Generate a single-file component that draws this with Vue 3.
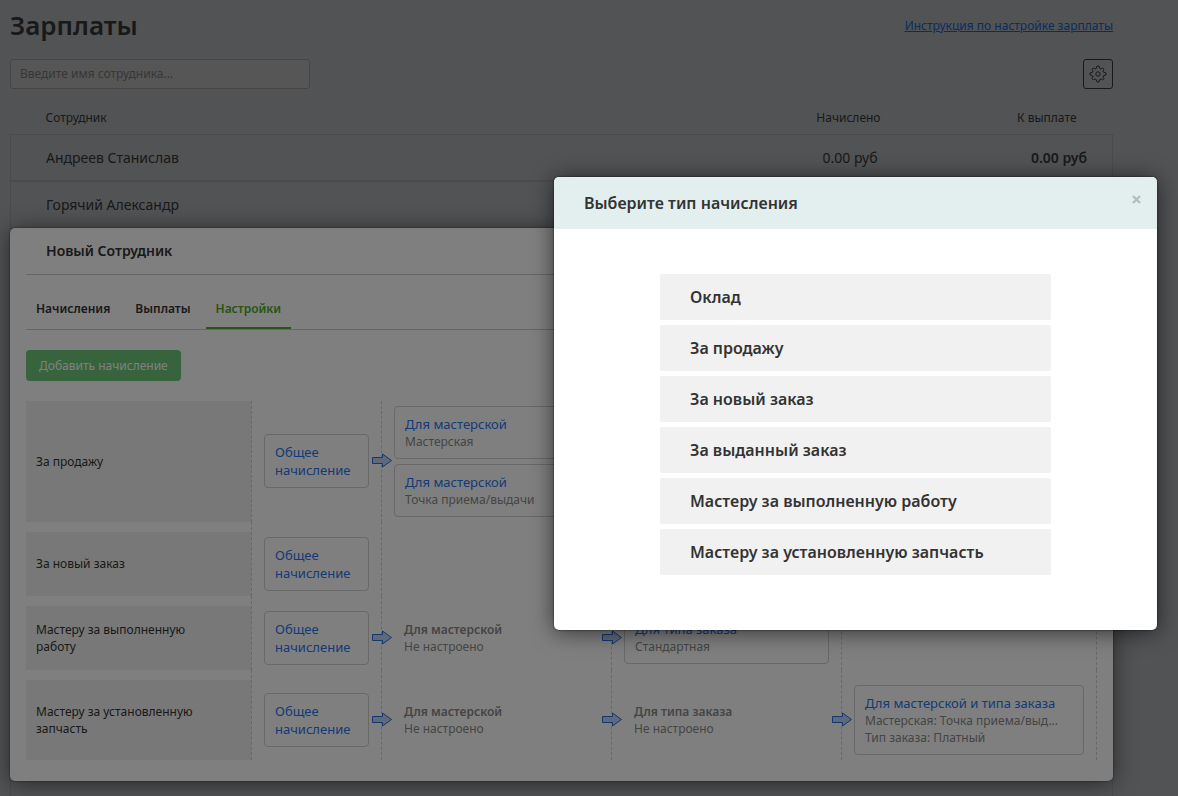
<script setup>
import { ref } from 'vue'

const search = ref('')
const employees = [
  { name: 'Андреев Станислав', accrued: '0.00 руб', due: '0.00 руб' },
  { name: 'Горячий Александр', accrued: '0.00 руб', due: '0.00 руб' }
]
const tabs = ['Начисления', 'Выплаты', 'Настройки']
const activeTab = ref('Настройки')

const common = { items: [{ title: 'Общее начисление', boxed: true }] }
const shopUnset = { items: [{ title: 'Для мастерской', lines: ['Не настроено'] }] }
const rules = [
  {
    label: 'За продажу',
    cells: [
      { ...common, arrow: true },
      {
        items: [
          { title: 'Для мастерской', lines: ['Мастерская'], boxed: true },
          { title: 'Для мастерской', lines: ['Точка приема/выдачи'], boxed: true }
        ]
      },
      { items: [] },
      { items: [] }
    ]
  },
  { label: 'За новый заказ', cells: [common, { items: [] }, { items: [] }, { items: [] }] },
  {
    label: 'Мастеру за выполненную работу',
    cells: [
      { ...common, arrow: true },
      { ...shopUnset, arrow: true },
      { items: [{ title: 'Для типа заказа', lines: ['Стандартная'], boxed: true }] },
      { items: [] }
    ]
  },
  {
    label: 'Мастеру за установленную запчасть',
    cells: [
      { ...common, arrow: true },
      { ...shopUnset, arrow: true },
      { items: [{ title: 'Для типа заказа', lines: ['Не настроено'] }], arrow: true },
      {
        items: [
          {
            title: 'Для мастерской и типа заказа',
            lines: ['Мастерская: Точка приема/выд...', 'Тип заказа: Платный'],
            boxed: true
          }
        ]
      }
    ]
  }
]

const types = [
  'Оклад',
  'За продажу',
  'За новый заказ',
  'За выданный заказ',
  'Мастеру за выполненную работу',
  'Мастеру за установленную запчасть'
]
</script>

<template>
  <div class="app">
    <main class="page">
      <header class="top">
        <h1>Зарплаты</h1>
        <a class="help" href="#">Инструкция по настройке зарплаты</a>
      </header>

      <div class="toolbar">
        <input v-model="search" class="search" type="text" aria-label="Имя сотрудника" placeholder="Введите имя сотрудника..." />
        <button class="gear" type="button" aria-label="Настройки">
          <svg viewBox="-9 -9 18 18" width="18" height="18" fill="none" stroke="currentColor" stroke-linejoin="round">
            <path d="M-1-8H1L1.7-5.6 2.9-5 4.7-6 6-4.7 5-2.9 5.6-1.7 8-1V1L5.6 1.7 5 2.9 6 4.7 4.7 6 2.9 5 1.7 5.6 1 8H-1L-1.7 5.6-2.9 5-4.7 6-6 4.7-5 2.9-5.6 1.7-8 1V-1L-5.6-1.7-5-2.9-6-4.7-4.7-6-2.9-5-1.7-5.6z" />
            <circle cx="0" cy="0" r="2.2" />
          </svg>
        </button>
      </div>

      <table class="people">
        <thead>
          <tr>
            <th scope="col">Сотрудник</th>
            <th scope="col" class="accrued">Начислено</th>
            <th scope="col" class="due">К выплате</th>
          </tr>
        </thead>
        <tbody>
          <tr v-for="p in employees" :key="p.name">
            <td>{{ p.name }}</td>
            <td class="accrued">{{ p.accrued }}</td>
            <td class="due">{{ p.due }}</td>
          </tr>
        </tbody>
      </table>

      <section class="card">
        <h2>Новый Сотрудник</h2>
        <nav class="tabs">
          <button v-for="t in tabs" :key="t" type="button" :class="{ active: t === activeTab }" @click="activeTab = t">{{ t }}</button>
        </nav>
        <button class="add" type="button">Добавить начисление</button>

        <div class="rules">
          <div v-for="r in rules" :key="r.label" class="rule">
            <div class="cell name"><div class="label">{{ r.label }}</div></div>
            <div v-for="(c, i) in r.cells" :key="i" class="cell">
              <div class="stack">
                <component :is="it.boxed ? 'button' : 'div'" v-for="(it, k) in c.items" :key="k" :class="it.boxed ? 'box' : 'unset'" :type="it.boxed ? 'button' : null">
                  <span class="title">{{ it.title }}</span>
                  <span v-for="l in it.lines" :key="l" class="line">{{ l }}</span>
                </component>
                <svg v-if="c.arrow" class="arrow" viewBox="0 0 20 15" width="20" height="15">
                  <path d="M.5 4.5H10.5V1L19.5 7.5 10.5 14V10.5H.5z" />
                </svg>
              </div>
            </div>
          </div>
        </div>
      </section>
      <div class="after"></div>
    </main>

    <div class="overlay">
      <div class="dialog" role="dialog" aria-modal="true" aria-labelledby="dialog-title">
        <header>
          <h3 id="dialog-title">Выберите тип начисления</h3>
          <button class="close" type="button" aria-label="Закрыть">
            <svg viewBox="0 0 9 9" width="9" height="9"><path d="M1 1l7 7M8 1L1 8" stroke="currentColor" stroke-width="2.4" /></svg>
          </button>
        </header>
        <div class="types">
          <button v-for="t in types" :key="t" type="button">{{ t }}</button>
        </div>
      </div>
    </div>
  </div>
</template>

<style>
body {
  margin: 0;
  background: #515355;
}
</style>

<style scoped>
* {
  box-sizing: border-box;
}
.app {
  position: relative;
  height: 100vh;
  overflow: hidden;
  background: #a3a6aa;
  color: #333;
  font: 12px/17px "Noto Sans", "Open Sans", sans-serif;
}
button {
  font: inherit;
  color: inherit;
  cursor: pointer;
}
.page {
  display: flex;
  flex-direction: column;
  min-height: 100%;
  padding: 0 65px 0 10px;
}
.top {
  display: flex;
  align-items: center;
  justify-content: space-between;
  height: 50px;
}
h1 {
  margin: 0;
  font-size: 26px;
  line-height: 36px;
  font-weight: 600;
}
.help {
  color: #1659c0;
}
.toolbar {
  display: flex;
  justify-content: space-between;
  padding-top: 9px;
}
.search {
  width: 300px;
  height: 30px;
  padding: 0 9px 2px;
  border: 1px solid #8a8a8a;
  border-radius: 3px;
  background: #acacac;
  font: inherit;
}
.search::placeholder {
  color: #6e6e6e;
  opacity: 1;
}
.gear {
  display: grid;
  place-items: center;
  width: 30px;
  height: 30px;
  padding: 0;
  border: 1px solid #333;
  border-radius: 3px;
  background: none;
}
.people {
  width: 100%;
  border-collapse: collapse;
  table-layout: fixed;
}
.people th {
  height: 45px;
  padding: 12px 35px 0;
  font-weight: 400;
  text-align: left;
}
.people tbody tr {
  height: 47px;
  border: 1px solid #94979a;
}
.people tbody tr + tr {
  border-top: 2px solid #94979a;
}
.people td {
  padding: 0 35px;
  font-size: 14px;
}
.people .accrued {
  width: 200px;
  padding: 0 35px 0 0;
  text-align: right;
}
.people .due {
  width: 200px;
  padding: 0 25px 0 0;
  text-align: right;
}
.people th.accrued {
  padding: 12px 32px 0 0;
}
.people th.due {
  padding: 12px 36px 0 0;
}
.people td.due {
  font-weight: 600;
}
.card {
  position: relative;
  margin-top: -1px;
  padding: 0 16px 21px;
  border-radius: 5px;
  background: #fff;
  box-shadow: 0 0 2px rgba(0, 0, 0, 0.6), 0 2px 22px rgba(20, 24, 16, 0.6);
}
.card h2 {
  margin: 0;
  padding: 0 20px;
  border-bottom: 1px solid #ccc;
  font-size: 14px;
  line-height: 46px;
  font-weight: 600;
}
.tabs {
  display: flex;
  gap: 5px;
  height: 55px;
  align-items: flex-end;
  border-bottom: 1px solid #ccc;
}
.tabs button {
  height: 39px;
  padding: 0 10px;
  border: 0;
  border-bottom: 2px solid transparent;
  background: none;
  font-weight: 600;
}
.tabs .active {
  border-color: #4faa28;
  color: #4faa28;
}
.add {
  height: 31px;
  margin: 20px 0;
  padding: 0 13px;
  border: 0;
  border-radius: 4px;
  background: #6ec97b;
  color: #fff;
}
.rule {
  display: grid;
  grid-template-columns: 226px 130px 230px 230px 1fr;
}
.cell {
  display: flex;
  min-width: 0;
  border-right: 1px dashed #d0d0d0;
}
.rule + .rule .cell {
  padding-top: 10px;
}
.label {
  display: flex;
  flex: 1;
  align-items: center;
  padding: 0 40px 0 10px;
  background: #f1f1f1;
}
.stack {
  position: relative;
  display: flex;
  flex: 1;
  flex-direction: column;
  justify-content: center;
  gap: 5px;
  min-width: 0;
  padding: 5px 12px;
}
.box {
  display: flex;
  flex-direction: column;
  padding: 8px 10px;
  border: 1px solid #d0d0d0;
  border-radius: 4px;
  background: none;
  text-align: left;
}
.unset {
  display: flex;
  flex-direction: column;
  padding: 10px;
  color: #8a8a8a;
}
.unset .title {
  font-weight: 600;
}
.box .title {
  color: #2874f0;
  font-size: 13px;
  line-height: 18px;
}
.line {
  overflow: hidden;
  max-width: 100%;
  color: #8a8a8a;
  text-overflow: ellipsis;
  white-space: nowrap;
}
.arrow {
  position: absolute;
  top: calc(50% - 8px);
  right: -11px;
  fill: #bdd2f2;
  stroke: #2a6fdc;
}
.after {
  flex: 1;
  border: 1px solid #94979a;
  border-width: 0 1px;
}
.overlay {
  position: absolute;
  inset: 0;
  display: flex;
  align-items: flex-start;
  justify-content: flex-end;
  padding: 177px 21px 0 0;
  background: rgba(0, 0, 0, 0.5);
}
.dialog {
  width: 603px;
  overflow: hidden;
  border-radius: 5px;
  background: #fff;
  box-shadow: 0 0 2px rgba(0, 0, 0, 0.8), 0 2px 22px rgba(0, 0, 0, 0.6);
}
.dialog header {
  display: flex;
  align-items: center;
  justify-content: space-between;
  height: 52px;
  padding: 0 16px 0 30px;
  background: #e2efee;
}
.dialog h3 {
  margin: 0;
  font-size: 16px;
  line-height: 22px;
  font-weight: 600;
}
.close {
  display: flex;
  align-self: flex-start;
  margin-top: 18px;
  padding: 0;
  border: 0;
  background: none;
  color: #b3bebd;
}
.types {
  display: flex;
  flex-direction: column;
  gap: 5px;
  padding: 45px 106px 55px;
}
.types button {
  height: 46px;
  padding: 0 30px;
  border: 0;
  border-radius: 2px;
  background: #f1f1f1;
  font-size: 16px;
  font-weight: 600;
  text-align: left;
}
</style>
